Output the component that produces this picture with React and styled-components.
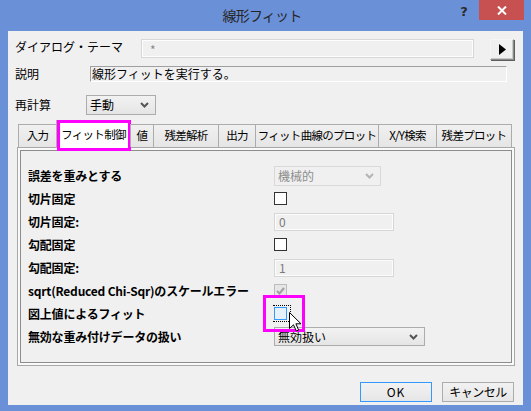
import React from 'react';
import styled, { createGlobalStyle } from 'styled-components';

const GlobalStyle = createGlobalStyle`
    html, body {
        margin: 0;
        padding: 0;
    }
    body {
        font-family: "Noto Sans CJK JP", "Noto Sans", sans-serif;
        font-size: 12px;
        color: #000;
    }
`;

const Frame = styled.div`
    width: 531px;
    height: 411px;
    box-sizing: border-box;
    background: #6a90d8;
    padding: 0 8px 6px;
    display: flex;
    flex-direction: column;
    overflow: hidden;
`;

const TitleBar = styled.div`
    height: 31px;
    margin: 0 -8px;
    padding-right: 7px;
    display: grid;
    grid-template-columns: 1fr auto 1fr;
`;

const Title = styled.div`
    font-size: 14px;
    line-height: 31px;
    color: #262626;
    letter-spacing: -0.8px;
`;

const Caption = styled.div`
    display: flex;
    justify-content: flex-end;
    align-items: flex-start;
`;

const HelpButton = styled.div`
    width: 24px;
    height: 20px;
    margin-right: 3px;
    font-family: "DejaVu Sans", sans-serif;
    font-weight: bold;
    font-size: 13px;
    line-height: 24px;
    text-align: center;
    color: #2b2b2b;
`;

const CloseButton = styled.div`
    width: 45px;
    height: 20px;
    background: #c75050;
    display: flex;
    align-items: center;
    justify-content: center;
`;

const Client = styled.div`
    flex: 1;
    background: #f0f0f0;
    display: flex;
    flex-direction: column;
    padding-left: 7px;
`;

const Row = styled.div`
    display: flex;
    align-items: ${p => p.align || 'center'};
    margin-top: ${p => p.top}px;
`;

const Label = styled.div`
    width: ${p => p.w}px;
    flex: none;
    line-height: 16px;
    white-space: nowrap;
`;

const ThemeField = styled.div`
    width: 333px;
    height: 19px;
    box-sizing: border-box;
    border: 1px solid #d7d7d7;
    box-shadow: inset 0 0 0 1px #fdfdfd;
    padding: 1px 0 0 8px;
    color: #8a8a8a;
    font-size: 12px;
    line-height: 17px;
`;

const ArrowButton = styled.div`
    width: 24px;
    height: 21px;
    margin-left: 16px;
    box-sizing: border-box;
    border: 1px solid;
    border-color: #f5f5f5 #8a8a8a #8a8a8a #f5f5f5;
    box-shadow: inset -1px -1px 0 #c8c8c8, 1px 1px 0 #5e5e5e;
    display: flex;
    align-items: center;
    justify-content: center;
`;

const DescField = styled.div`
    width: 417px;
    height: 16px;
    box-sizing: border-box;
    border: 1px solid;
    border-color: #a0a0a0 #fff #fff #a0a0a0;
    line-height: 14px;
    padding-left: 1px;
    white-space: nowrap;
`;

const Select = styled.div`
    width: ${p => p.w}px;
    height: ${p => p.h || 20}px;
    box-sizing: border-box;
    border: 1px solid ${p => (p.disabled ? '#d9d9d9' : '#acacac')};
    background: ${p => (p.disabled ? '#f0f0f0' : 'linear-gradient(#f2f2f2, #e5e5e5)')};
    color: ${p => (p.disabled ? '#8d8d8d' : '#000')};
    display: flex;
    align-items: center;
    justify-content: space-between;
    padding: 0 6px 0 3px;
    line-height: 16px;
`;

const TabStrip = styled.div`
    display: flex;
    align-items: flex-end;
    height: 27px;
    margin: 5px 0 0 4px;
    position: relative;
    z-index: 1;
`;

const Tab = styled.div`
    width: ${p => p.w}px;
    flex: none;
    box-sizing: border-box;
    height: ${p => (p.active ? 28 : 23)}px;
    margin-bottom: ${p => (p.active ? -1 : 0)}px;
    margin-left: -1px;
    border: 1px solid #acacac;
    border-bottom: none;
    background: ${p => (p.active ? '#fff' : 'linear-gradient(#f0f0f0, #e5e5e5)')};
    text-align: center;
    font-size: 11.5px;
    line-height: ${p => (p.active ? 26 : 21)}px;
    white-space: nowrap;
    letter-spacing: -0.7px;
    position: relative;
`;

const TabMark = styled.div`
    position: absolute;
    left: 0;
    right: -1px;
    top: -1px;
    bottom: -3px;
    border: 3px solid #ff00ff;
`;

const Panel = styled.div`
    width: 498px;
    height: 219px;
    margin-left: 2px;
    box-sizing: border-box;
    border: 1px solid #a8a8a8;
    box-shadow: inset 0 0 0 2px #f9f9f9, inset 0 0 0 3px #8c8c8c;
    display: grid;
    grid-template-columns: 246px 1fr;
    grid-auto-rows: 23px;
    align-items: center;
    align-content: start;
    padding: 16px 0 0 10px;
`;

const FieldLabel = styled.div`
    font-weight: bold;
    white-space: nowrap;
    letter-spacing: -0.2px;
    line-height: 16px;
`;

const CheckSlot = styled.div`
    position: relative;
    width: 13px;
    height: 13px;
`;

const Check = styled.div`
    width: 13px;
    height: 13px;
    box-sizing: border-box;
    border: 1px solid ${p => (p.focus ? '#3399ff' : p.disabled ? '#bcbcbc' : '#333')};
    background: ${p => (p.focus ? '#e5f1fb' : p.disabled ? '#e6e6e6' : '#fff')};
    display: flex;
    align-items: center;
    justify-content: center;
`;

const FocusRect = styled.div`
    position: absolute;
    left: -1px;
    top: -2px;
    width: 17px;
    height: 15px;
    border: 1px dotted #000;
    border-left: none;
`;

const CheckMark = styled.div`
    position: absolute;
    left: -11px;
    top: -12px;
    width: 42px;
    height: 37px;
    box-sizing: border-box;
    border: 3px solid #ff00ff;
`;

const Cursor = styled.svg`
    position: absolute;
    left: 15px;
    top: 5px;
`;

const TextBox = styled.div`
    width: 120px;
    height: 18px;
    box-sizing: border-box;
    border: 1px solid #d6d6d6;
    box-shadow: inset 0 0 0 1px #fcfcfc;
    color: #7a7a7a;
    padding-left: 4px;
    line-height: 16px;
`;

const ButtonRow = styled.div`
    display: flex;
    justify-content: flex-end;
    gap: 10px;
    margin-top: 16px;
    padding-right: 9px;
`;

const Button = styled.div`
    width: 72px;
    height: 20px;
    box-sizing: border-box;
    border: 1px solid ${p => (p.primary ? '#3399ff' : '#acacac')};
    background: linear-gradient(#f2f2f2, #e6e6e6);
    text-align: center;
    line-height: 18px;
    letter-spacing: ${p => (p.primary ? '1px' : '-0.5px')};
`;

const Chevron = ({ color = '#555' }) => (
    <svg width="9" height="6" viewBox="0 0 9 6">
        <polyline points="1,1 4.5,4.5 8,1" fill="none" stroke={color} strokeWidth="2" />
    </svg>
);

const tabs = [
    { label: '入力', w: 39 },
    { label: 'フィット制御', w: 75, active: true },
    { label: '値', w: 24 },
    { label: '残差解析', w: 66 },
    { label: '出力', w: 38 },
    { label: 'フィット曲線のプロット', w: 124 },
    { label: 'X/Y検索', w: 59 },
    { label: '残差プロット', w: 76 },
];

export default function App() {
    return (
        <>
            <GlobalStyle />
            <Frame>
                <TitleBar>
                    <div />
                    <Title>線形フィット</Title>
                    <Caption>
                        <HelpButton>?</HelpButton>
                        <CloseButton>
                            <svg width="10" height="9" viewBox="0 0 10 9">
                                <path d="M1 0.5 L9 8.5 M9 0.5 L1 8.5" stroke="#fff" strokeWidth="2" />
                            </svg>
                        </CloseButton>
                    </Caption>
                </TitleBar>
                <Client>
                    <Row top={8} align="flex-start">
                        <Label w={126}>ダイアログ・テーマ</Label>
                        <ThemeField>*</ThemeField>
                        <ArrowButton>
                            <svg width="7" height="11" viewBox="0 0 7 11">
                                <polygon points="0,0 7,5.5 0,11" fill="#000" />
                            </svg>
                        </ArrowButton>
                    </Row>
                    <Row top={6}>
                        <Label w={75}>説明</Label>
                        <DescField>線形フィットを実行する。</DescField>
                    </Row>
                    <Row top={13}>
                        <Label w={71}>再計算</Label>
                        <Select w={70}>
                            <span>手動</span>
                            <Chevron />
                        </Select>
                    </Row>
                    <TabStrip>
                        {tabs.map(t => (
                            <Tab key={t.label} w={t.w} active={t.active}>
                                {t.label}
                                {t.active && <TabMark />}
                            </Tab>
                        ))}
                    </TabStrip>
                    <Panel>
                        <FieldLabel>誤差を重みとする</FieldLabel>
                        <Select w={107} disabled>
                            <span>機械的</span>
                            <Chevron color="#b4b4b4" />
                        </Select>
                        <FieldLabel>切片固定</FieldLabel>
                        <CheckSlot><Check /></CheckSlot>
                        <FieldLabel>切片固定:</FieldLabel>
                        <TextBox>0</TextBox>
                        <FieldLabel>勾配固定</FieldLabel>
                        <CheckSlot><Check /></CheckSlot>
                        <FieldLabel>勾配固定:</FieldLabel>
                        <TextBox>1</TextBox>
                        <FieldLabel>sqrt(Reduced Chi-Sqr)のスケールエラー</FieldLabel>
                        <CheckSlot>
                            <Check disabled>
                                <svg width="9" height="8" viewBox="0 0 9 8">
                                    <polyline points="1,4 3.5,6.5 8,1" fill="none" stroke="#a0a0a0" strokeWidth="2" />
                                </svg>
                            </Check>
                        </CheckSlot>
                        <FieldLabel>図上値によるフィット</FieldLabel>
                        <CheckSlot>
                            <Check focus />
                            <FocusRect />
                            <CheckMark />
                            <Cursor width="13" height="20" viewBox="0 0 13 20">
                                <path d="M0.5 0.5 L0.5 16.5 L4.5 12.8 L7.3 19 L9.6 18 L6.9 11.8 L12 11.8 Z" fill="#fff" stroke="#000" strokeWidth="1" />
                            </Cursor>
                        </CheckSlot>
                        <FieldLabel>無効な重み付けデータの扱い</FieldLabel>
                        <Select w={151} h={19}>
                            <span>無効扱い</span>
                            <Chevron />
                        </Select>
                    </Panel>
                    <ButtonRow>
                        <Button primary>OK</Button>
                        <Button>キャンセル</Button>
                    </ButtonRow>
                </Client>
            </Frame>
        </>
    );
}
